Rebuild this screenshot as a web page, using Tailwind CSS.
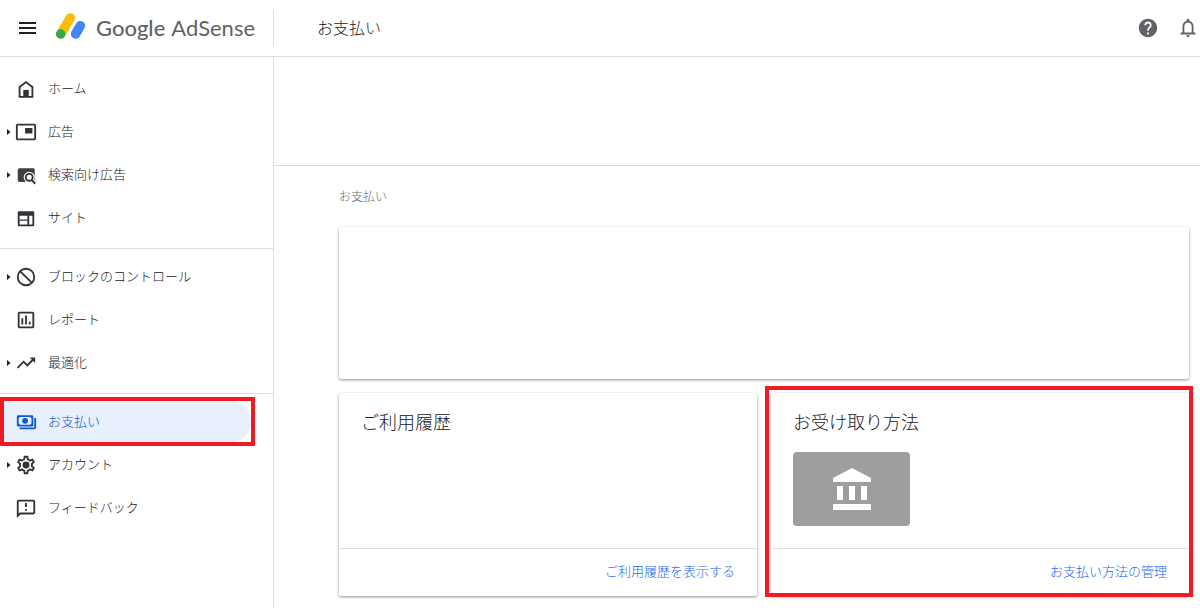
<!DOCTYPE html>
<html lang="ja">
<head>
    <meta charset="UTF-8">
    <meta name="viewport" content="width=device-width, initial-scale=1.0">
    <title>お支払い - Google AdSense</title>
    <script src="https://cdn.jsdelivr.net/npm/@tailwindcss/browser@4"></script>
</head>
<body class="flex h-screen flex-col overflow-hidden bg-white font-['Noto_Sans_CJK_JP',sans-serif] font-light text-[#202124]">
    <!-- Top bar -->
    <header class="flex h-[57px] shrink-0 items-center border-b border-[#dadce0]">
        <div class="flex h-9 w-[274px] shrink-0 items-center border-r border-[#dadce0] pl-[18px]">
            <button type="button" aria-label="メニュー" class="mr-[18px]">
                <svg class="size-[18px]" viewBox="0 0 18 18" fill="#202124"><path d="M1 3h17v2H1zM1 8h17v2H1zM1 13h17v2H1z"/></svg>
            </button>
            <a href="#" class="flex items-center gap-[10px] font-['Lato',sans-serif] text-[22px] leading-7 text-[#5f6368]">
                <svg class="h-8 w-8" viewBox="0 0 32 32" fill="none" stroke-linecap="round">
                    <path d="M6.800 22L16.300 5.900" stroke="#fbbc04" stroke-width="9.500"/>
                    <path d="M21.600 22L26.400 13.700" stroke="#4285f4" stroke-width="9.500"/>
                    <circle cx="6.700" cy="22" r="4.750" fill="#34a853"/>
                </svg>
                <span class="whitespace-nowrap"><span class="font-medium">Google</span> <span class="font-normal">AdSense</span></span>
            </a>
        </div>
        <h1 class="flex-1 pb-[3px] pl-[43px] text-base">お支払い</h1>
        <div class="flex items-center gap-[18px] pr-px">
            <button type="button" aria-label="ヘルプ">
                <svg class="size-[22px]" viewBox="0 0 24 24" fill="#5f6368"><path d="M12 2C6.480 2 2 6.480 2 12s4.480 10 10 10 10-4.480 10-10S17.520 2 12 2zm1 17h-2v-2h2v2zm2.070-7.750l-.9.920C13.450 12.900 13 13.500 13 15h-2v-.5c0-1.100.45-2.100 1.170-2.830l1.240-1.260c.37-.36.59-.86.59-1.410 0-1.100-.9-2-2-2s-2 .9-2 2H8c0-2.210 1.790-4 4-4s4 1.790 4 4c0 .88-.36 1.680-.93 2.250z"/></svg>
            </button>
            <button type="button" aria-label="通知">
                <svg class="size-[22px]" viewBox="0 0 24 24" fill="#5f6368"><path d="M4 19v-2h2v-7c0-2.790 1.910-5.140 4.500-5.800V3.500a1.500 1.500 0 0 1 3 0v.7C16.090 4.860 18 7.210 18 10v7h2v2H4zm8 3c-1.100 0-2-.9-2-2h4c0 1.100-.9 2-2 2zm-4-5h8v-7c0-2.210-1.790-4-4-4s-4 1.790-4 4v7z"/></svg>
            </button>
        </div>
    </header>

    <div class="flex min-h-0 flex-1">
        <!-- Sidebar -->
        <nav class="w-[274px] shrink-0 border-r border-[#dadce0] pt-[10px] text-[13px]">
            <ul class="border-b border-[#dadce0] pb-[9px]">
                <li>
                    <a href="#" class="flex h-[43px] items-center pt-px pl-[15px]">
                        <svg class="mr-[11px] size-[22px]" viewBox="0 0 24 24" fill="#303438"><path d="M12 3.200L4 9.400V21.500h16V9.400L12 3.200zM18 19.500H6v-9.100l6-4.700 6 4.700v9.100z"/><path d="M9 13h6v7H9z"/></svg>
                        <span class="pb-[3px]">ホーム</span>
                    </a>
                </li>
                <li>
                    <a href="#" class="flex h-[43px] items-center pt-px pl-[7px]">
                        <svg class="mr-1 h-[6px] w-1" viewBox="0 0 4 6" fill="#202124"><path d="M0 0l3.500 3L0 6z"/></svg>
                        <svg class="mr-[11px] size-[22px]" viewBox="0 0 24 24" fill="#303438"><path d="M19 7.500h-8v6h8v-6zM21 3H3c-1.100 0-2 .9-2 2v14c0 1.100.9 2 2 2h18c1.100 0 2-.9 2-2V5c0-1.100-.9-2-2-2zm0 16H3V5h18v14z"/></svg>
                        <span class="pb-[3px]">広告</span>
                    </a>
                </li>
                <li>
                    <a href="#" class="flex h-[43px] items-center pt-px pl-[7px]">
                        <svg class="mr-1 h-[6px] w-1" viewBox="0 0 4 6" fill="#202124"><path d="M0 0l3.500 3L0 6z"/></svg>
                        <svg class="mr-[11px] size-[22px]" viewBox="0 0 24 24" fill="none">
                            <path d="M5 4.500h15a1.500 1.500 0 0 1 1.500 1.500v13.500H5a2 2 0 0 1-2-2v-11a2 2 0 0 1 2-2z" fill="#3c4043"/>
                            <path d="M18 17.500l5 5" stroke="#fff" stroke-width="5"/>
                            <circle cx="15.500" cy="14.500" r="6" fill="#fff"/>
                            <circle cx="15.500" cy="14.500" r="3.800" stroke="#303438" stroke-width="2"/>
                            <path d="M18 17l4 4.500" stroke="#303438" stroke-width="2.200"/>
                        </svg>
                        <span class="pb-[3px]">検索向け広告</span>
                    </a>
                </li>
                <li>
                    <a href="#" class="flex h-[43px] items-center pt-px pl-[15px]">
                        <svg class="mr-[11px] size-[22px]" viewBox="0 0 24 24" fill="#303438"><path fill-rule="evenodd" d="M4.500 4.500h15A1.500 1.500 0 0 1 21 6v13.500a1.500 1.500 0 0 1-1.500 1.500h-15A1.500 1.500 0 0 1 3 19.500V6a1.500 1.500 0 0 1 1.500-1.500zM5 9.500v4h8.500v-4zM5 15v4h8.500v-4zM15.500 9.500V19H19V9.500z"/></svg>
                        <span class="pb-[3px]">サイト</span>
                    </a>
                </li>
            </ul>
            <ul class="border-b border-[#dadce0] pt-[6px] pb-[9px]">
                <li>
                    <a href="#" class="flex h-[43px] items-center pt-px pl-[7px]">
                        <svg class="mr-1 h-[6px] w-1" viewBox="0 0 4 6" fill="#202124"><path d="M0 0l3.500 3L0 6z"/></svg>
                        <svg class="mr-[11px] size-[22px]" viewBox="0 0 24 24" fill="none" stroke="#303438" stroke-width="2"><circle cx="12" cy="12" r="9"/><path d="M5.500 5.500l13 13"/></svg>
                        <span class="pb-[3px]">ブロックのコントロール</span>
                    </a>
                </li>
                <li>
                    <a href="#" class="flex h-[43px] items-center pt-px pl-[15px]">
                        <svg class="mr-[11px] size-[22px]" viewBox="0 0 24 24" fill="#303438"><path d="M19 3H5c-1.100 0-2 .9-2 2v14c0 1.100.9 2 2 2h14c1.100 0 2-.9 2-2V5c0-1.100-.9-2-2-2zm0 16H5V5h14v14zM7 10h2v7H7v-7zm4-3h2v10h-2V7zm4 7h2v3h-2v-3z"/></svg>
                        <span class="pb-[3px]">レポート</span>
                    </a>
                </li>
                <li>
                    <a href="#" class="flex h-[43px] items-center pt-px pl-[7px]">
                        <svg class="mr-1 h-[6px] w-1" viewBox="0 0 4 6" fill="#202124"><path d="M0 0l3.500 3L0 6z"/></svg>
                        <svg class="mr-[11px] size-[22px]" viewBox="0 0 24 24" fill="#303438"><path d="M16 6l2.290 2.290-4.880 4.880-4-4L2 16.590 3.410 18l6-6 4 4 6.300-6.290L22 12V6z"/></svg>
                        <span class="pb-[3px]">最適化</span>
                    </a>
                </li>
            </ul>
            <ul class="pt-[6px]">
                <li class="relative">
                    <a href="#" aria-current="page" class="mr-[22px] flex h-[43px] items-center rounded-r-full bg-[#e8f0fe] pt-px pl-[15px] text-[#0b57d0]">
                        <svg class="mr-[11px] size-[22px]" viewBox="0 0 24 24" fill="#0b5bd3"><path fill-rule="evenodd" d="M3.500 4.500h15A1.500 1.500 0 0 1 20 6v9.500a1.500 1.500 0 0 1-1.500 1.500h-15A1.500 1.500 0 0 1 2 15.500V6a1.500 1.500 0 0 1 1.500-1.500zM5.500 6.500l-1.500 1.500v5.500L5.500 15h11l1.500-1.500V8l-1.500-1.500zM11 7.500a3.200 3.200 0 1 1 0 6.400 3.200 3.200 0 0 1 0-6.400z"/><path d="M21 7.500h2V18a2 2 0 0 1-2 2H5v-2h16z"/></svg>
                        <span class="pb-[3px]">お支払い</span>
                    </a>
                    <div class="pointer-events-none absolute -top-[3px] right-[18px] -bottom-[3px] left-0 border-4 border-[#ed1c24]"></div>
                </li>
                <li>
                    <a href="#" class="flex h-[43px] items-center pt-px pl-[7px]">
                        <svg class="mr-1 h-[6px] w-1" viewBox="0 0 4 6" fill="#202124"><path d="M0 0l3.500 3L0 6z"/></svg>
                        <svg class="mr-[11px] size-[22px]" viewBox="0 0 24 24" fill="#303438"><path d="M19.430 12.980c.04-.32.07-.64.07-.98 0-.34-.03-.66-.07-.98l2.110-1.650c.19-.15.24-.42.12-.64l-2-3.460c-.09-.16-.26-.25-.44-.25-.06 0-.12.010-.17.030l-2.490 1c-.52-.4-1.080-.73-1.690-.98l-.38-2.650C14.460 2.180 14.250 2 14 2h-4c-.25 0-.46.18-.49.42l-.38 2.650c-.61.25-1.170.59-1.690.98l-2.490-1c-.06-.02-.12-.03-.18-.03-.17 0-.34.09-.43.25l-2 3.460c-.13.22-.07.49.12.64l2.110 1.650c-.04.32-.07.65-.07.98s.03.66.07.98l-2.110 1.650c-.19.15-.24.42-.12.64l2 3.460c.09.16.26.25.44.25.06 0 .12-.01.17-.03l2.490-1c.52.4 1.080.73 1.690.98l.38 2.650c.03.24.24.42.49.42h4c.25 0 .46-.18.49-.42l.38-2.650c.61-.25 1.170-.59 1.690-.98l2.490 1c.06.02.12.03.18.03.17 0 .34-.09.43-.25l2-3.460c.12-.22.07-.49-.12-.64l-2.110-1.650zm-1.980-1.710c.04.31.05.52.05.73 0 .21-.02.43-.05.73l-.14 1.130.89.7 1.080.84-.7 1.210-1.270-.51-1.040-.42-.9.680c-.43.32-.84.56-1.250.73l-1.060.43-.16 1.130-.2 1.350h-1.400l-.19-1.350-.16-1.130-1.060-.43c-.43-.18-.83-.41-1.230-.71l-.91-.7-1.060.43-1.270.51-.7-1.210 1.080-.84.89-.7-.14-1.130c-.03-.31-.05-.54-.05-.74s.02-.43.05-.73l.14-1.130-.89-.7-1.080-.84.7-1.210 1.270.51 1.040.42.9-.68c.43-.32.84-.56 1.250-.73l1.060-.43.16-1.130.2-1.350h1.390l.19 1.350.16 1.130 1.060.43c.43.18.83.41 1.230.71l.91.7 1.060-.43 1.270-.51.7 1.210-1.070.85-.89.7.14 1.130z"/><circle cx="12" cy="12" r="3.800"/></svg>
                        <span class="pb-[3px]">アカウント</span>
                    </a>
                </li>
                <li>
                    <a href="#" class="flex h-[43px] items-center pt-px pl-[15px]">
                        <svg class="mr-[11px] size-[22px]" viewBox="0 0 24 24" fill="#303438"><path d="M20 3H4c-1.100 0-2 .9-2 2v18l4-4h14c1.100 0 2-.9 2-2V5c0-1.100-.9-2-2-2zm0 14H5.170L4 18.170V5h16v12zM11 6.500h2V11h-2zM11 13h2v2h-2z"/></svg>
                        <span class="pb-[3px]">フィードバック</span>
                    </a>
                </li>
            </ul>
        </nav>

        <!-- Payments -->
        <main class="min-w-0 flex-1">
            <div class="h-[109px] border-b border-[#dadce0]"></div>
            <div class="pt-5 pr-[11px] pl-[65px]">
                <p class="text-xs leading-5 text-[#666]">お支払い</p>
                <section class="mt-[21px] h-[152px] rounded-xs shadow-[0_1px_3px_rgba(0,0,0,0.45)]"></section>
                <div class="mt-[14px] grid grid-cols-2 gap-[14px]">
                    <section class="flex flex-col rounded-xs shadow-[0_1px_3px_rgba(0,0,0,0.45)]">
                        <div class="h-[155px] px-[22px] pt-[14px]">
                            <h2 class="text-lg leading-7">ご利用履歴</h2>
                        </div>
                        <div class="flex h-12 items-center justify-end border-t border-[#e0e0e0] px-[22px] pb-[3px] text-[13px]">
                            <a href="#" class="text-[#1a68f0]">ご利用履歴を表示する</a>
                        </div>
                    </section>
                    <section class="relative flex flex-col rounded-xs shadow-[0_1px_3px_rgba(0,0,0,0.45)]">
                        <div class="h-[155px] px-[22px] pt-[14px]">
                            <h2 class="text-lg leading-7">お受け取り方法</h2>
                            <div class="mt-[17px] flex h-[74px] w-[117px] items-center justify-center rounded-sm bg-[#9e9e9e]">
                                <svg class="size-[46px]" viewBox="0 0 23 23" fill="#fff"><path d="M4 10v7h3v-7H4zm6 0v7h3v-7h-3zM2 22h19v-3H2v3zm14-12v7h3v-7h-3zm-4.500-9L2 6v2h19V6l-9.500-5z"/></svg>
                            </div>
                        </div>
                        <div class="flex h-12 items-center justify-end border-t border-[#e0e0e0] px-[22px] pb-[3px] text-[13px]">
                            <a href="#" class="text-[#1a68f0]">お支払い方法の管理</a>
                        </div>
                        <div class="pointer-events-none absolute -top-[7px] -right-1 -bottom-px -left-[6px] border-4 border-[#ed1c24]"></div>
                    </section>
                </div>
            </div>
        </main>
    </div>
</body>
</html>
